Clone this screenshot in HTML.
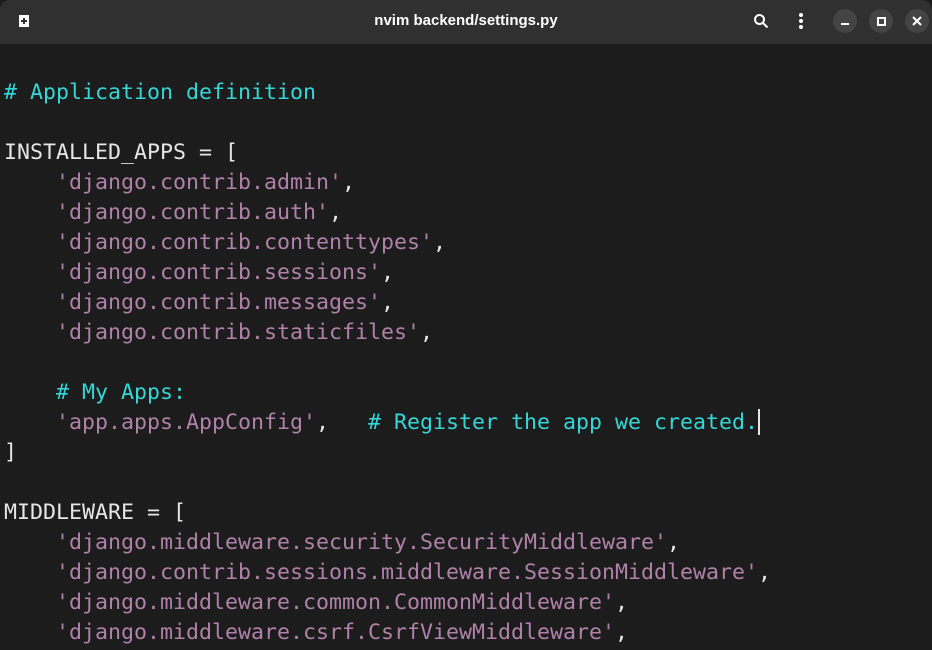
<!DOCTYPE html>
<html><head><style>
html,body{margin:0;padding:0;width:932px;height:650px;overflow:hidden;background:#1c1c1c;}
.bar{position:absolute;left:0;top:0;width:932px;height:44px;background:#303030;border-radius:10px 10px 0 0;}
.title{position:absolute;left:0;right:0;top:12px;text-align:center;color:#fff;font:bold 15px "Liberation Sans","DejaVu Sans",sans-serif;}
.btn{position:absolute;top:9px;width:24px;height:24px;border-radius:12px;background:#444;}
pre{position:absolute;left:4px;top:78px;margin:0;font:21.6px/30px "DejaVu Sans Mono","Liberation Mono",monospace;color:#e6e6e6;}
.c{color:#36d6d6}.s{color:#b081a9}
.cur{display:inline-block;width:2px;height:26px;background:#e6e6e6;vertical-align:-6px}
</style></head><body>
<div class="bar">
<svg style="position:absolute;left:17px;top:14px" width="14" height="14" viewBox="0 0 14 14"><path d="M2 1h10v12H2z" fill="#fff"/><path d="M7 4v6M4 7h6" stroke="#303030" stroke-width="2"/></svg>
<div class="title">nvim backend/settings.py</div>
<svg style="position:absolute;left:753px;top:13px" width="16" height="16" viewBox="0 0 16 16"><circle cx="6.5" cy="6.5" r="4.5" fill="none" stroke="#fff" stroke-width="2"/><path d="M10 10l4.5 4.5" stroke="#fff" stroke-width="2"/></svg>
<svg style="position:absolute;left:798px;top:12px" width="6" height="18"><circle cx="3" cy="3" r="2" fill="#fff"/><circle cx="3" cy="9" r="2" fill="#fff"/><circle cx="3" cy="15" r="2" fill="#fff"/></svg>
<div class="btn" style="left:833px"><div style="position:absolute;left:8px;top:14px;width:8px;height:2px;background:#fff"></div></div>
<div class="btn" style="left:869px"><div style="position:absolute;left:8px;top:8px;width:5px;height:5px;border:2px solid #fff"></div></div>
<div class="btn" style="left:905px"><svg style="position:absolute;left:7px;top:7px" width="10" height="10"><path d="M1 1l8 8M9 1l-8 8" stroke="#fff" stroke-width="2"/></svg></div>
</div>
<pre><span class="c"># Application definition</span>

INSTALLED_APPS = [
    <span class="s">'django.contrib.admin'</span>,
    <span class="s">'django.contrib.auth'</span>,
    <span class="s">'django.contrib.contenttypes'</span>,
    <span class="s">'django.contrib.sessions'</span>,
    <span class="s">'django.contrib.messages'</span>,
    <span class="s">'django.contrib.staticfiles'</span>,

    <span class="c"># My Apps:</span>
    <span class="s">'app.apps.AppConfig'</span>,   <span class="c"># Register the app we created.</span><span class="cur"></span>
]

MIDDLEWARE = [
    <span class="s">'django.middleware.security.SecurityMiddleware'</span>,
    <span class="s">'django.contrib.sessions.middleware.SessionMiddleware'</span>,
    <span class="s">'django.middleware.common.CommonMiddleware'</span>,
    <span class="s">'django.middleware.csrf.CsrfViewMiddleware'</span>,
</pre>
</body></html>
